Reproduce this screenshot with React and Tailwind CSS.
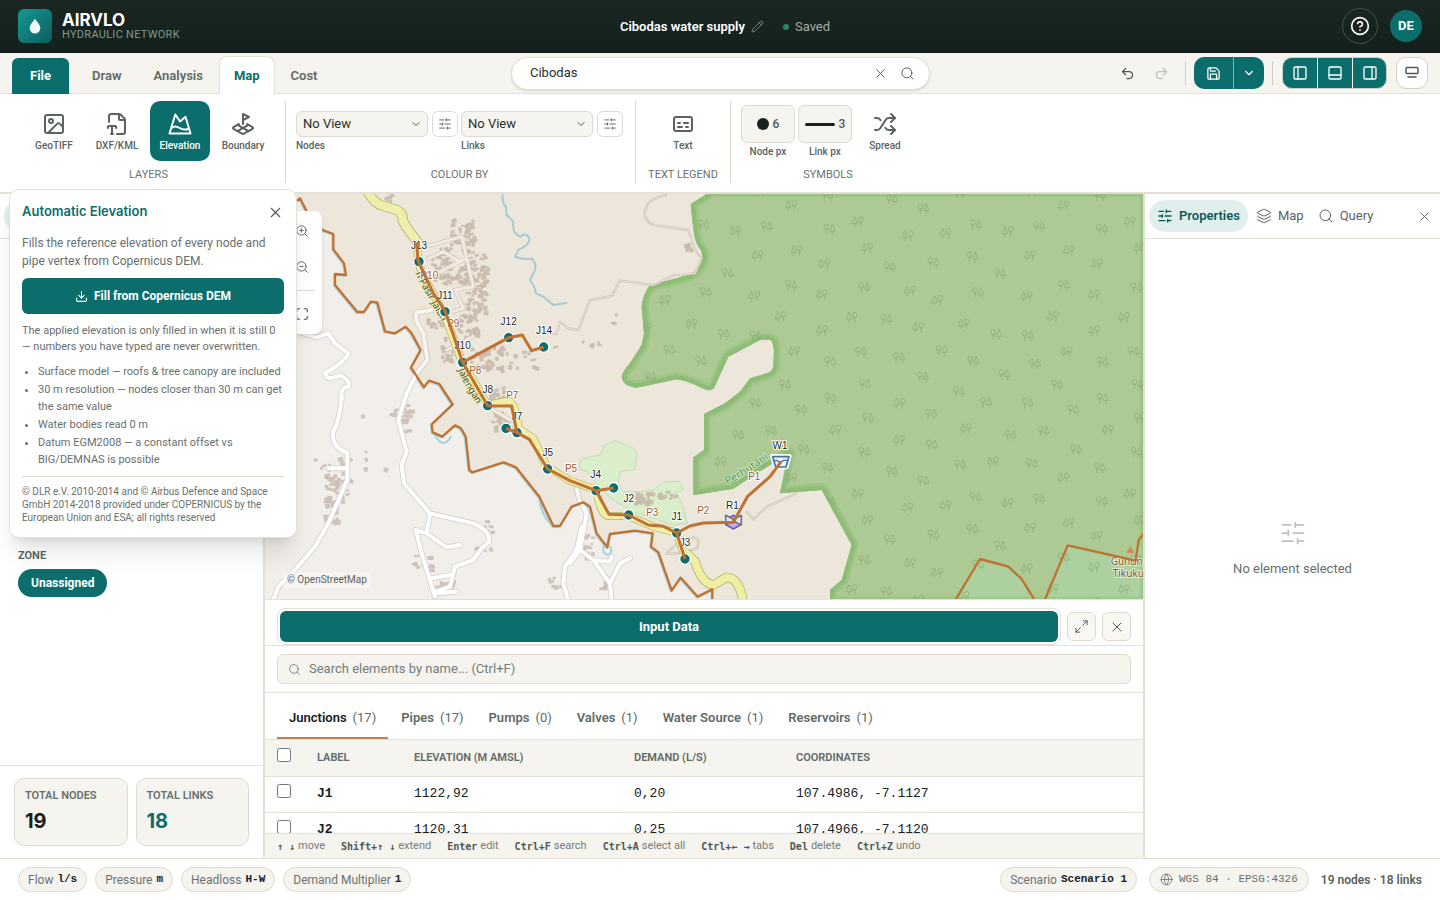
import {
  Captions, ChevronDown, CircleHelp, Download, FileType2, Globe, Image as ImageIcon, LandPlot, Layers,
  Maximize, Maximize2, PanelBottom, PanelLeft, PanelRight, Pencil, Redo2, Save, Search, Shuffle,
  SlidersHorizontal, Undo2, X, ZoomIn, ZoomOut,
} from "lucide-react";

/* ---------- Map data (three units per screen pixel) ---------- */

const TREES = [
  [23, 95, 1], [173, 137, 1], [287, 130, 1], [377, 105, 0], [473, 124, 1], [567, 110, 0], [755, 118, 0],
  [52, 175, 1], [119, 232, 0], [250, 218, 0], [367, 201, 0], [450, 251, 0], [540, 197, 1], [657, 182, 1],
  [740, 222, 1], [43, 293, 0], [180, 303, 1], [262, 332, 1], [384, 308, 0], [530, 319, 1], [641, 287, 0],
  [732, 315, 1], [5, 382, 1], [109, 388, 0], [205, 413, 1], [341, 402, 1], [438, 433, 0], [533, 437, 0],
  [609, 380, 1], [733, 422, 1], [33, 485, 0], [147, 503, 0], [275, 481, 0], [370, 514, 0], [463, 554, 0],
  [555, 522, 0], [650, 485, 1], [758, 516, 0], [45, 583, 0], [218, 561, 0], [326, 605, 0], [408, 637, 0],
  [148, 640, 1], [533, 640, 0], [622, 585, 0], [758, 625, 0], [54, 685, 0], [243, 672, 0], [348, 716, 1],
  [482, 736, 0], [580, 723, 0], [670, 660, 0], [774, 720, 1], [147, 751, 1], [246, 765, 0], [43, 787, 0],
  [330, 825, 0], [429, 816, 1], [546, 822, 0], [678, 780, 0], [125, 845, 0], [220, 873, 0], [641, 864, 1],
  [749, 834, 0],
];
const TREE_TILES = [953, 1770, 2587].flatMap((x) => [-817, 0, 817].map((y) => [x, y]));

const BOUNDARY_WEST =
  "100 40 120 25 137 58 160 105 188 120 220 132 220 178 252 220 258 255 225 252 225 285 292 366 312 366 333 335 352 338 375 424 405 430 437 410 455 430 482 480 453 533 492 592 507 572 538 582 578 643 515 703 518 727 547 740 585 706 602 714 617 740 628 840 637 847 731 817 768 832 838 920 880 1008 900 1008 935 950 970 937 990 950 1010 1030 1042 1072 1050 1032 1125 1022 1178 1030 1173 1070 1195 1087 1235 1202 1262 1163 1313 1220 1357 1198 1357 1240";
const BOUNDARY_EAST =
  "2080 1240 2160 1107 2245 1130 2285 1167 2330 1240 2350 1240 2423 1066 2627 1112 2636 1050 2660 1020";

const FOREST =
  "M1350 0 1340 12 1292 42 1297 90 1302 130Q1306 155 1315 170Q1332 190 1326 210Q1318 240 1290 253L1250 265 1170 285Q1148 315 1145 350L1152 430 1145 465 1110 520Q1085 548 1085 562Q1090 590 1130 593L1250 568Q1290 575 1320 592Q1350 608 1362 594L1405 500 1500 450Q1530 446 1537 455L1542 480 1540 530Q1535 546 1520 550L1470 565 1440 605 1395 640 1332 672 1332 780 1300 802 1300 915 1420 896 1490 850 1585 792 1560 910 1685 900 1775 1065 1745 1170 1710 1200 1710 1240 2660 1240 2660 0Z";

const ROADS = [
  "M245 620Q240 690 218 730Q218 775 262 788L262 870 205 1000 165 1070 100 1145 55 1190 40 1230",
  "M130 430 170 442 205 430 225 460 265 490Q262 510 195 550Q200 575 240 555Q275 575 265 590Q240 590 245 630",
  "M560 370 540 355 470 368Q460 385 490 430L502 510 470 550 440 610 415 690 440 785 425 825 432 880 510 970 640 1000Q690 1020 688 1055L665 1075 640 1110 585 1130 570 1190 527 1205",
  "M510 970 500 1030 467 1020 485 1090 525 1220M500 1030 560 1072 600 1065M515 1165 570 1155M527 1210 590 1205M205 835 262 835",
  "M950 895 958 930 980 970 960 1080 1000 1110 1050 1180 1055 1230M930 1120 960 1080M1050 1180 1080 1120 1110 1105M1000 1110 1050 1115 1055 1100",
  "M965 1010 950 1080 915 1130 910 1180 925 1230",
];
const LANES = ["M480 175 605 140 640 290 585 300 610 355 560 370M505 205 550 185 600 215M540 245 620 205M560 480 640 440M700 660 750 690"];
const TRAILS = [
  "M1218 15Q1150 30 1155 75Q1160 105 1200 108L1285 120 1305 180 1325 205 1305 250 1240 256 1180 285 1080 272 1055 318 990 330 955 420 925 415 900 395 890 432 850 425",
  "M1610 910 1520 950 1480 988 1460 965",
  "M1220 1090Q1250 1055 1300 1042Q1325 1050 1310 1075Q1270 1090 1222 1092Z",
];
const STREAM =
  "M728 12Q725 40 738 50L740 75 760 95Q755 130 780 140Q800 125 808 145Q810 165 775 180L765 200Q800 210 815 205 830 220 825 240L810 270Q825 290 828 310L850 320 880 345 920 338";
const MAIN_ROAD_NORTH = "M320 0Q340 40 370 48L410 60Q430 70 428 90Q435 110 480 165";
const MAIN_ROAD =
  "M472 165 474 215 490 260 550 365 604 510 683 645 745 632Q768 640 775 715L820 745 860 830 930 872 1010 900Q1020 975 1045 978L1105 978 1180 1010 1250 1028 1275 1100";
const MAIN_ROAD_SOUTH = "M1280 1090 1305 1115Q1325 1180 1360 1185L1400 1162Q1440 1165 1450 1240";
const MEADOW =
  "M958 815 970 805 1020 795 1035 765 1065 752 1120 775Q1132 785 1130 800L1125 838 1080 845 1075 880 1090 905 1140 905 1180 900 1215 875 1260 875 1270 897 1240 912 1262 928 1282 1000 1240 1005 1120 965 1060 930 1020 895 980 845 958 838Z";

const PIPES = [
  "470 158 474 212 520 310 555 362 608 517 683 647 755 648 771 728",
  "608 517 746 443 787 435 815 482 851 471",
  "738 715 771 728 808 748 863 837 930 872 1008 902 1061 894",
  "1008 902 1047 973 1106 975 1165 1005 1210 1009 1250 1029 1275 1107",
  "1250 1029 1290 1008 1330 999 1420 997 1462 920 1530 860 1563 815",
];
const JUNCTIONS = [
  [477, 215], [555, 365], [608, 517], [746, 443], [851, 471], [683, 647], [738, 715], [771, 728],
  [863, 837], [1008, 902], [1061, 894], [1106, 975], [1250, 1029], [1275, 1107],
];
const NODE_LABELS = [
  ["J13", 477, 177], ["J11", 555, 328], ["J10", 608, 477], ["J12", 746, 405], ["J14", 852, 431], ["J8", 683, 610],
  ["J7", 771, 691], ["J5", 863, 798], ["J4", 1007, 863], ["J2", 1106, 936], ["J1", 1250, 990],
  ["J3", 1275, 1068], ["R1", 1417, 957], ["W1", 1560, 777],
];
const PIPE_LABELS = [
  ["P10", 508, 267], ["P9", 580, 412], ["P8", 646, 552], ["P7", 757, 627], ["P5", 933, 847],
  ["P3", 1177, 978], ["P2", 1330, 972], ["P1", 1483, 870],
];

/* Clusters of houses: x, y, width, height, count */
const CLUSTERS = [
  [515, 165, 60, 60, 26], [520, 225, 100, 50, 34], [570, 90, 70, 70, 36], [600, 150, 40, 130, 30], [640, 190, 45, 90, 24],
  [615, 300, 60, 70, 28], [640, 280, 30, 30, 8],
  [590, 370, 60, 70, 34], [500, 375, 50, 40, 9], [540, 430, 40, 80, 16], [630, 470, 95, 70, 40],
  [730, 480, 100, 60, 12], [670, 590, 70, 40, 20], [695, 660, 50, 60, 26], [375, 10, 18, 20, 4], [875, 463, 12, 8, 1],
  [385, 650, 50, 40, 10], [420, 640, 40, 80, 16], [160, 800, 110, 40, 12], [190, 850, 45, 150, 60], [235, 840, 35, 130, 12],
  [455, 1090, 60, 50, 12], [520, 1150, 60, 40, 16], [610, 1065, 100, 16, 4], [670, 990, 35, 60, 8],
  [860, 1150, 50, 60, 8], [1120, 905, 60, 40, 26], [1190, 900, 50, 20, 10], [965, 1020, 30, 100, 14],
  [1010, 1170, 30, 30, 8], [1048, 366, 24, 36, 3], [964, 448, 68, 20, 5], [1274, 162, 14, 14, 8], [280, 640, 100, 200, 5],
];
function makeHouses() {
  let seed = 7;
  const next = () => {
    seed = (seed * 16807) % 2147483647;
    return seed / 2147483647;
  };
  return CLUSTERS.flatMap(([x, y, w, h, n]) =>
    Array.from({ length: n }, () => ({
      x: Math.round(x + next() * w),
      y: Math.round(y + next() * h),
      w: Math.round(6 + next() * 9),
      h: Math.round(5 + next() * 7),
      r: Math.round(next() * 50 - 25),
    }))
  );
}
const HOUSES = makeHouses();

function MapView() {
  return (
    <svg
      viewBox="15 12 2634 1215"
      preserveAspectRatio="xMinYMin slice"
      className="block h-full w-full"
      role="img"
      aria-label="Network map"
    >
      <defs>
        <clipPath id="forest-clip"><path d={FOREST} /></clipPath>
        <g id="tree-a" fill="none" stroke="#8bb079" strokeWidth="2.2">
          <ellipse cx="-9" cy="-7" rx="7" ry="8" />
          <path d="M-9 -2V15M-9 5 -4 0M9 -15 1 6H17ZM9 6V16" />
        </g>
        <g id="tree-b" fill="none" stroke="#8bb079" strokeWidth="2.2">
          <ellipse cx="9" cy="-7" rx="7" ry="8" />
          <path d="M9 -2V15M9 5 4 0M-9 -15 -17 6H-1ZM-9 6V16" />
        </g>
        <path id="street-a" d="M466 250Q500 320 590 470" />
        <path id="street-b" d="M594 540Q620 605 700 710" />
        <path id="forest-name" d="M1402 884Q1470 850 1560 780" />
      </defs>

      <rect x="0" y="0" width="2700" height="1300" fill="#f2efea" />
      <path d={MEADOW} fill="#dff8d8" stroke="#c4e8bc" strokeWidth="3" />

      <path d={FOREST} fill="#add19e" />
      <g clipPath="url(#forest-clip)" fill="none" strokeLinejoin="round">
        <path d={FOREST} stroke="#9ecb8e" strokeWidth="42" />
        <path d={FOREST} stroke="#8ac37c" strokeWidth="26" />
        {TREE_TILES.map(([tx, ty]) => (
          <g key={`${tx}:${ty}`} transform={`translate(${tx} ${ty})`}>
            {TREES.map(([x, y, kind]) => (
              <use key={`${x}-${y}`} href={kind ? "#tree-b" : "#tree-a"} x={x} y={y} />
            ))}
          </g>
        ))}
      </g>

      <g fill="none" strokeLinejoin="round" strokeLinecap="round">
        {TRAILS.map((d) => <path key={d} d={d} stroke="#d0cbc5" strokeWidth="7" />)}
        {TRAILS.map((d) => <path key={d} d={d} stroke="#eeebe6" strokeWidth="3" />)}
        <path d={STREAM} stroke="#a3d3e0" strokeWidth="6" />
        <polyline points={BOUNDARY_WEST} transform="translate(-3 3)" stroke="#b3d9e3" strokeWidth="6" />
        <path d="M524 735Q550 780 572 740M838 930Q845 980 880 1010M1035 1060Q1020 1090 1045 1095Q1060 1085 1050 1070" stroke="#a3d3e0" strokeWidth="6" />
      </g>
      <g fill="#d0c5bc" stroke="#c2b5ab" strokeWidth="1">
        {HOUSES.map((b, i) => (
          <rect key={i} x={b.x} y={b.y} width={b.w} height={b.h} transform={`rotate(${b.r} ${b.x} ${b.y})`} />
        ))}
      </g>
      <g fill="none" strokeLinejoin="round" strokeLinecap="round">
        {LANES.map((d) => <path key={d} d={d} stroke="#d6cdc8" strokeWidth="13" />)}
        {LANES.map((d) => <path key={d} d={d} stroke="#f8f3f2" strokeWidth="9" />)}
        {ROADS.map((d) => <path key={d} d={d} stroke="#d5d1cd" strokeWidth="17" />)}
        {ROADS.map((d) => <path key={d} d={d} stroke="#ffffff" strokeWidth="12" />)}
        <path d={MAIN_ROAD} stroke="#b5b76d" strokeWidth="24" />
        <path d={MAIN_ROAD_NORTH} stroke="#a9ab5b" strokeWidth="30" />
        <path d={MAIN_ROAD_SOUTH} stroke="#a9ab5b" strokeWidth="28" />
        <path d={MAIN_ROAD} stroke="#f6f8ac" strokeWidth="20" />
        <path d={MAIN_ROAD_NORTH} stroke="#f6f8b6" strokeWidth="26" />
        <path d={MAIN_ROAD_SOUTH} stroke="#f6f8ac" strokeWidth="24" />
      </g>

      <polygon points={`${BOUNDARY_WEST} ${BOUNDARY_EAST} 2660 0 100 0`} fill="#b88333" fillOpacity="0.08" />

      <g fontFamily="'Noto Sans', sans-serif" fontSize="29">
        <g fill="#4b4a20" stroke="#f4f3c0" strokeWidth="4" paintOrder="stroke">
          <text><textPath href="#street-a">n Pasir Jalan</textPath></text>
          <text><textPath href="#street-b">Jalengan</textPath></text>
        </g>
        <text fill="#4f9446" stroke="#dcebcf" strokeWidth="4" paintOrder="stroke" fontSize="32">
          <textPath href="#forest-name">Perhutani</textPath>
        </text>
        <g fill="#7a5a44" stroke="#e6eed8" strokeWidth="5" paintOrder="stroke" fontSize="30">
          <text x="2552" y="1124">Gunung</text>
          <text x="2558" y="1162">Tikukur</text>
        </g>
      </g>
      <path d="M2611 1068 2623 1089H2599Z" fill="#d08a4e" />

      <g fill="none" stroke="#bf7233" strokeWidth="7" strokeLinejoin="round">
        <polyline points={BOUNDARY_WEST} />
        <polyline points={BOUNDARY_EAST} />
      </g>

      <g fill="#0b6e6d" stroke="#fff" strokeWidth="4">
        {JUNCTIONS.map(([x, y]) => <circle key={`${x}-${y}`} cx={x} cy={y} r="16" />)}
      </g>
      <g strokeLinejoin="round">
        <path d="M1399 988 1420 976 1441 988V1005L1420 1017 1399 1005Z" fill="#f1ecfa" stroke="#fff" strokeWidth="11" />
        <path d="M1399 988 1420 976 1441 988V1005L1420 1017 1399 1005Z" fill="#c3b0e6" stroke="#7a4fc0" strokeWidth="5" />
        <path d="M1397 976 1420 988 1444 976V1005L1420 993 1397 1005Z" fill="#eceaf0" stroke="#6b7389" strokeWidth="5" />
        <path d="M1536 798H1589L1580 832H1545Z" fill="#eef4fa" stroke="#fff" strokeWidth="12" />
        <path d="M1538 800H1587L1578 831H1547Z" fill="#eef4fa" stroke="#42739f" strokeWidth="5" />
        <path d="M1543 814Q1549 808 1555 814T1567 814T1582 812" fill="none" stroke="#42739f" strokeWidth="4" />
      </g>
      <g fontFamily="'Liberation Sans', Arial, sans-serif" fontSize="30" textAnchor="middle" stroke="#fff" strokeWidth="6" strokeLinejoin="round" paintOrder="stroke">
        {NODE_LABELS.map(([t, x, y]) => <text key={t} x={x} y={y} fill="#1b1f1e">{t}</text>)}
        {PIPE_LABELS.map(([t, x, y]) => <text key={t} x={x} y={y} fill="#9c5a32">{t}</text>)}
      </g>
      <g fill="none" stroke="#bf7233" strokeWidth="9" strokeLinejoin="round">
        {PIPES.map((p) => <polyline key={p} points={p} />)}
      </g>
    </svg>
  );
}

/* ---------- Icons ---------- */

function ElevationIcon() {
  return (
    <svg viewBox="0 0 24 24" className="size-6" fill="none" stroke="currentColor" strokeWidth="2" strokeLinejoin="round" strokeLinecap="round" aria-hidden="true">
      <path d="M1.5 21.5 7.3 2.5 12 9.5 17.5 4.8 22.5 21.5Z" />
      <path d="M4 15.8C6.5 13.5 9 14.5 11.5 16S17.5 18.3 21 16.5" />
    </svg>
  );
}
function RibbonModeIcon() {
  return (
    <svg viewBox="0 0 16 16" className="size-4" fill="none" stroke="currentColor" strokeWidth="1.5" strokeLinejoin="round" strokeLinecap="round" aria-hidden="true">
      <rect x="2" y="2.5" width="12" height="6" rx="1" />
      <path d="M4 12H12" />
    </svg>
  );
}

/* ---------- Small parts ---------- */

function Tool({ icon, label, active }) {
  return (
    <button
      type="button"
      className={`flex h-15 w-15 flex-col items-center gap-1 rounded-[10px] pt-[11px] text-[10px] leading-3 font-medium ${active ? "bg-[#0b6e6d] text-white" : "text-[#5b6361]"}`}
    >
      {icon}
      {label}
    </button>
  );
}
function Group({ title, className, children }) {
  return (
    <section className={`flex h-[82px] flex-col justify-between ${className}`}>
      <div className="flex items-start gap-[3px]">{children}</div>
      <h2 className="text-center text-[11px] leading-[17px] text-[#6b7370]">{title}</h2>
    </section>
  );
}
function ColourPicker({ id, label }) {
  return (
    <div className="mt-[10px]">
      <div className="flex gap-1">
        <div className="relative">
          <select id={id} className="h-[26px] w-[132px] appearance-none rounded-md border border-[#dedad0] bg-[#f5f4ee] pl-[6px] text-[13px] text-[#26302d]">
            <option>No View</option>
          </select>
          <ChevronDown className="pointer-events-none absolute top-[7px] right-[6px] size-3 text-[#4f5856]" />
        </div>
        <button type="button" aria-label={`${label} settings`} className="grid size-[26px] place-items-center rounded-md border border-[#dedad0] bg-white text-[#4f5856]">
          <SlidersHorizontal size={14} strokeWidth={1.5} />
        </button>
      </div>
      <label htmlFor={id} className="mt-[3px] block text-[10px] leading-3 font-medium text-[#5b6361]">{label}</label>
    </div>
  );
}
function SizeBox({ label, value, children }) {
  return (
    <div className="mt-1 text-center">
      <button type="button" aria-label={label} className="flex h-[38px] w-[54px] items-center justify-center gap-1 rounded-md border border-[#dedad0] bg-[#f5f4ee] text-[12px] font-medium text-[#4f5856]">
        {children}
        {value}
      </button>
      <span className="mt-[3px] block text-[10px] leading-3 font-medium text-[#5b6361]">{label}</span>
    </div>
  );
}
function Chip({ label, value }) {
  return (
    <span className="flex h-[25px] items-center gap-1 rounded-full border border-[#dedad0] bg-[#f5f4ee] px-[9px] text-[12px] text-[#6b7370]">
      {label}
      <b className="font-['Liberation_Mono',monospace] text-[11px] text-[#17211e]">{value}</b>
    </span>
  );
}

const TABS = [["Junctions", 17], ["Pipes", 17], ["Pumps", 0], ["Valves", 1], ["Water Source", 1], ["Reservoirs", 1]];
const ROWS = [["J1", "1122,92", "0,20", "107.4986, -7.1127"], ["J2", "1120,31", "0,25", "107.4966, -7.1120"]];
const KEYS = [["↑ ↓", "move"], ["Shift+↑ ↓", "extend"], ["Enter", "edit"], ["Ctrl+F", "search"], ["Ctrl+A", "select all"], ["Ctrl+← →", "tabs"], ["Del", "delete"], ["Ctrl+Z", "undo"]];

/* ---------- Regions ---------- */

function Header() {
  return (
    <header className="grid h-[53px] shrink-0 grid-cols-[1fr_auto_1fr] items-center border-b border-[#0c1512] bg-linear-to-b from-[#1b2723] to-[#14201c] px-[18px]">
      <div className="flex items-center gap-[10px]">
        <div className="grid size-[34px] place-items-center rounded-md bg-linear-to-br from-[#159a94] to-[#0b5f5f]">
          <svg viewBox="0 0 12 16" className="h-4 w-3" fill="#eef8f7" aria-hidden="true">
            <path d="M6 0.5C7.5 3.5 11.3 6.5 11.3 10.2A5.3 5.3 0 0 1 0.7 10.2C0.7 6.5 4.5 3.5 6 0.5Z" />
          </svg>
        </div>
        <div>
          <h1 className="font-['Inter',sans-serif] text-[17px] leading-[17px] font-bold text-white">AIRVLO</h1>
          <p className="text-[11px] leading-3 tracking-wide text-[#7f9a8e]">HYDRAULIC NETWORK</p>
        </div>
      </div>
      <div className="flex items-center pt-px pl-[10px] text-[13px]">
        <span className="font-semibold text-white">Cibodas water supply</span>
        <button type="button" aria-label="Rename project" className="ml-[6px] text-[#8b9792]"><Pencil size={13} strokeWidth={1.5} /></button>
        <span className="mr-[6px] ml-[19px] size-[6px] rounded-full bg-[#2f8463]" />
        <span className="text-[#a3aca8]">Saved</span>
      </div>
      <div className="flex items-center justify-end gap-3">
        <button type="button" aria-label="Help" className="grid size-9 place-items-center rounded-full border border-[#45504c] text-white"><CircleHelp size={20} strokeWidth={2} /></button>
        <button type="button" className="size-8 rounded-full bg-[#0b6e6d] text-[13px] font-bold text-white">DE</button>
      </div>
    </header>
  );
}

function TabBar() {
  const plain = "h-9 px-4 text-[13px] font-semibold text-[#616a67]";
  return (
    <div className="grid h-[41px] shrink-0 grid-cols-[1fr_420px_1fr] items-center border-b border-[#e4e0d5] bg-[#f5f4ee] px-3">
      <nav className="-mb-px flex items-end self-end" aria-label="Ribbon">
        <button type="button" className="mr-[7px] h-9 rounded-t-md bg-[#0b6e6d] px-[18px] text-[13px] font-bold text-white">File</button>
        <button type="button" className={plain}>Draw</button>
        <button type="button" className={plain}>Analysis</button>
        <button type="button" className="h-[38px] rounded-t-lg border border-b-0 border-[#e4e0d5] bg-white px-[14px] text-[13px] font-bold text-[#0b6e6d]">Map</button>
        <button type="button" className={plain}>Cost</button>
      </nav>
      <div className="ml-px flex h-[33px] items-center rounded-full border border-[#e4e0d5] bg-white pr-[14px] pl-[18px] text-[#4f5856] shadow-sm">
        <input aria-label="Search place" defaultValue="Cibodas" className="min-w-0 flex-1 text-[13px] text-[#26302d] outline-none" />
        <button type="button" aria-label="Clear" className="mr-3"><X size={15} strokeWidth={1.5} /></button>
        <button type="button" aria-label="Search"><Search size={15} strokeWidth={1.5} /></button>
      </div>
      <div className="flex items-center justify-end text-[#4f5856]">
        <button type="button" aria-label="Undo" className="mr-[19px]"><Undo2 size={15} strokeWidth={2} /></button>
        <button type="button" aria-label="Redo" className="mr-4 text-[#bdbfba]"><Redo2 size={15} strokeWidth={2} /></button>
        <span className="h-6 w-px bg-[#cfccc3]" />
        <div className="mx-2 flex h-8 divide-x divide-[#7db3b1] overflow-hidden rounded-[10px] bg-[#0b6e6d] text-white">
          <button type="button" aria-label="Save" className="grid w-10 place-items-center"><Save size={15} strokeWidth={2} /></button>
          <button type="button" aria-label="Save options" className="grid w-[30px] place-items-center"><ChevronDown size={14} strokeWidth={2} /></button>
        </div>
        <span className="h-6 w-px bg-[#cfccc3]" />
        <div className="mx-[9px] flex h-8 divide-x divide-white overflow-hidden rounded-[10px] border border-[#c9d2c8] bg-[#0b6e6d] text-white">
          <button type="button" aria-label="Left panel" className="grid w-[35px] place-items-center"><PanelLeft size={16} strokeWidth={2} /></button>
          <button type="button" aria-label="Bottom panel" className="grid w-[35px] place-items-center"><PanelBottom size={16} strokeWidth={2} /></button>
          <button type="button" aria-label="Right panel" className="grid w-[33px] place-items-center"><PanelRight size={16} strokeWidth={2} /></button>
        </div>
        <button type="button" aria-label="Ribbon display" className="grid size-8 place-items-center rounded-[10px] border border-[#d6d2c2] bg-white"><RibbonModeIcon /></button>
      </div>
    </div>
  );
}

function Ribbon() {
  return (
    <div className="flex h-[100px] shrink-0 divide-x divide-[#dedad0] border-b-2 border-[#e4e0d5] bg-white px-3 pt-[7px]">
      <Group title="LAYERS" className="px-3">
        <Tool icon={<ImageIcon size={24} strokeWidth={2} />} label="GeoTIFF" />
        <Tool icon={<FileType2 size={24} strokeWidth={2} />} label="DXF/KML" />
        <Tool icon={<ElevationIcon />} label="Elevation" active />
        <Tool icon={<LandPlot size={24} strokeWidth={2} />} label="Boundary" />
      </Group>
      <Group title="COLOUR BY" className="pr-3 pl-[10px]">
        <ColourPicker id="nodes-view" label="Nodes" />
        <ColourPicker id="links-view" label="Links" />
      </Group>
      <Group title="TEXT LEGEND" className="w-[95px] px-[10px]">
        <div className="flex flex-1 justify-center"><Tool icon={<Captions size={24} strokeWidth={2} />} label="Text" /></div>
      </Group>
      <Group title="SYMBOLS" className="px-[10px]">
        <SizeBox label="Node px" value="6"><span className="size-3 rounded-full bg-[#17211e]" /></SizeBox>
        <SizeBox label="Link px" value="3"><span className="h-[3px] w-[30px] rounded-full bg-[#17211e]" /></SizeBox>
        <Tool icon={<Shuffle size={24} strokeWidth={2} />} label="Spread" />
      </Group>
    </div>
  );
}

function ElevationPopover() {
  return (
    <div role="dialog" aria-labelledby="elevation-title" className="absolute top-[-5px] left-[9px] z-20 w-[288px] rounded-[10px] border border-[#e4e0d5] bg-white px-3 pt-2 pb-[13px] text-[#68706d] shadow-xl">
      <div className="flex h-7 items-center justify-between">
        <h2 id="elevation-title" className="font-['Inter',sans-serif] text-[13px] font-semibold text-[#0b6e6d]">Automatic Elevation</h2>
        <button type="button" aria-label="Close" className="text-[#4f5856]"><X size={17} strokeWidth={1.5} /></button>
      </div>
      <p className="mt-2 text-[12px] leading-[18px]">Fills the reference elevation of every node and pipe vertex from Copernicus DEM.</p>
      <button type="button" className="mt-2 flex h-9 w-full items-center justify-center gap-[6px] rounded-md bg-[#0b6e6d] text-[12px] font-bold text-white">
        <Download size={13} strokeWidth={2} />
        Fill from Copernicus DEM
      </button>
      <p className="mt-[9px] text-[11px] leading-4">The applied elevation is only filled in when it is still 0 — numbers you have typed are never overwritten.</p>
      <ul className="mt-2 flex list-disc flex-col gap-px pl-4 text-[11px] leading-[17px]">
        <li>Surface model — roofs &amp; tree canopy are included</li>
        <li>30 m resolution — nodes closer than 30 m can get the same value</li>
        <li>Water bodies read 0 m</li>
        <li>Datum EGM2008 — a constant offset vs BIG/DEMNAS is possible</li>
      </ul>
      <p className="mt-2 border-t border-[#dedad0] pt-2 text-[10px] leading-[13px]">© DLR e.V. 2010-2014 and © Airbus Defence and Space GmbH 2014-2018 provided under COPERNICUS by the European Union and ESA; all rights reserved</p>
    </div>
  );
}

function LeftPanel() {
  const card = "flex-1 rounded-[10px] border border-[#dedad0] bg-[#f5f4ee] px-[10px] pt-[9px] pb-[11px]";
  return (
    <aside className="flex w-[265px] shrink-0 flex-col border-r-2 border-[#e4e0d5] bg-white">
      <div className="flex h-[45px] items-center border-b border-[#e4e0d5] px-1">
        <span className="h-8 w-[99px] rounded-full bg-[#e1efec]" />
      </div>
      <div className="flex flex-1 flex-col items-start px-[18px] pt-[308px]">
        <h3 className="text-[11px] leading-[17px] font-semibold text-[#59625f]">ZONE</h3>
        <button type="button" className="mt-[5px] h-7 rounded-full bg-[#0b6e6d] px-[13px] text-[12px] font-bold text-white">Unassigned</button>
      </div>
      <div className="flex gap-2 border-t border-[#e4e0d5] px-[14px] py-3">
        <div className={card}>
          <p className="text-[11px] leading-4 font-semibold text-[#68706d]">TOTAL NODES</p>
          <p className="mt-1 font-['Inter',sans-serif] text-[20px] leading-[26px] font-bold text-[#17211e]">19</p>
        </div>
        <div className={card}>
          <p className="text-[11px] leading-4 font-semibold text-[#68706d]">TOTAL LINKS</p>
          <p className="mt-1 font-['Inter',sans-serif] text-[20px] leading-[26px] font-bold text-[#0b6e6d]">18</p>
        </div>
      </div>
    </aside>
  );
}

function DataPanel() {
  const icon = "grid size-[29px] place-items-center rounded-md border border-[#dedad0] bg-[#f8f7f2] text-[#4f5856]";
  const cell = "px-3 text-left";
  const box = "mb-[6px] block size-[14px]";
  return (
    <section className="flex h-[259px] shrink-0 flex-col border-t border-[#e4e0d5] bg-white">
      <div className="flex h-[46px] shrink-0 items-center gap-[6px] border-b border-[#e4e0d5] px-3 pt-2">
        <div className="flex-1 rounded-lg border border-[#e4e0d5] p-[2px]">
          <button type="button" className="block h-[31px] w-full rounded-md bg-[#0b6e6d] text-[13px] font-bold text-white">Input Data</button>
        </div>
        <button type="button" aria-label="Expand" className={icon}><Maximize2 size={15} strokeWidth={1.5} /></button>
        <button type="button" aria-label="Close panel" className={icon}><X size={16} strokeWidth={1.5} /></button>
      </div>
      <div className="shrink-0 border-b border-[#e4e0d5] px-3 py-2">
        <div className="flex h-[30px] items-center gap-2 rounded-md border border-[#dedad0] bg-[#f5f4ee] px-[10px] text-[#6b7370]">
          <Search size={13} strokeWidth={1.5} />
          <input aria-label="Search elements" placeholder="Search elements by name... (Ctrl+F)" className="min-w-0 flex-1 text-[13px] outline-none placeholder:text-[#757d7a]" />
        </div>
      </div>
      <div className="flex h-[47px] shrink-0 gap-px border-b border-[#e4e0d5] px-3" role="tablist">
        {TABS.map(([name, count], i) => (
          <button key={name} type="button" role="tab" aria-selected={i === 0} className={`flex items-center gap-[6px] border-b-2 px-3 pt-[6px] text-[13px] ${i === 0 ? "border-[#c07f4a] text-[#17211e]" : "border-transparent text-[#616a67]"}`}>
            <span className="font-semibold">{name}</span>
            <span className="text-[#616a67]">({count})</span>
          </button>
        ))}
      </div>
      <div className="min-h-0 flex-1 overflow-hidden">
        <table className="w-full table-fixed border-collapse">
          <thead>
            <tr className="h-9 border-b border-[#e4e0d5] bg-[#f5f4ee] text-[11px] text-[#616a67]">
              <th className="w-10 px-3 text-left"><input type="checkbox" aria-label="Select all" className={box} /></th>
              <th className={`w-[97px] font-semibold ${cell}`}>LABEL</th>
              <th className={`w-[220px] font-semibold ${cell}`}>ELEVATION (M AMSL)</th>
              <th className={`w-[162px] font-semibold ${cell}`}>DEMAND (L/S)</th>
              <th className={`font-semibold ${cell}`}>COORDINATES</th>
            </tr>
          </thead>
          <tbody className="font-['Liberation_Mono',monospace] text-[13px] text-[#17211e]">
            {ROWS.map(([label, ...rest]) => (
              <tr key={label} className="h-9 border-b border-[#e4e0d5]">
                <td className="px-3"><input type="checkbox" aria-label={`Select ${label}`} className={box} /></td>
                <td className={`font-bold ${cell}`}>{label}</td>
                {rest.map((v) => <td key={v} className={cell}>{v}</td>)}
              </tr>
            ))}
          </tbody>
        </table>
      </div>
      <div className="flex h-[25px] shrink-0 items-center gap-4 border-t border-[#e4e0d5] bg-[#f5f4ee] px-3 text-[11px] whitespace-nowrap text-[#757d7a]">
        {KEYS.map(([k, t]) => (
          <span key={k} className="flex items-center gap-[3px]">
            <kbd className="font-['DejaVu_Sans_Mono',monospace] text-[10px] font-bold text-[#4f5856]">{k}</kbd>
            {t}
          </span>
        ))}
      </div>
    </section>
  );
}

function RightPanel() {
  return (
    <aside className="flex w-[297px] shrink-0 flex-col border-l-2 border-[#e4e0d5] bg-white text-[13px] text-[#59625f]">
      <div className="flex h-[45px] items-center border-b border-[#e4e0d5] pr-2 pl-1">
        <button type="button" className="flex h-8 items-center gap-[6px] rounded-full bg-[#e1efec] px-2 font-semibold text-[#0b5a58]"><SlidersHorizontal size={16} strokeWidth={2} />Properties</button>
        <button type="button" className="flex h-8 items-center gap-[6px] px-2"><Layers size={16} strokeWidth={1.5} />Map</button>
        <button type="button" className="flex h-8 items-center gap-[6px] px-[6px]"><Search size={16} strokeWidth={1.5} />Query</button>
        <button type="button" aria-label="Close panel" className="ml-auto"><X size={15} strokeWidth={1.5} /></button>
      </div>
      <div className="flex flex-1 flex-col items-center justify-center gap-3 text-[#68706d]">
        <SlidersHorizontal size={28} strokeWidth={1.5} className="text-[#bfc2bf]" />
        <p>No element selected</p>
      </div>
    </aside>
  );
}

export default function App() {
  return (
    <div className="flex h-screen flex-col overflow-hidden bg-white font-['Roboto',sans-serif] text-[#26302d]">
      <Header />
      <TabBar />
      <Ribbon />
      <main className="relative flex min-h-0 flex-1">
        <LeftPanel />
        <div className="flex min-w-0 flex-1 flex-col">
          <div className="relative min-h-0 flex-1 overflow-hidden">
            <MapView />
            <div className="absolute top-[17px] left-[17px] flex w-10 flex-col items-center rounded-lg bg-white py-[2px] text-[#4f5856] shadow-md">
              <button type="button" aria-label="Zoom in" className="grid size-9 place-items-center"><ZoomIn size={14} strokeWidth={1.5} /></button>
              <button type="button" aria-label="Zoom out" className="grid size-9 place-items-center"><ZoomOut size={14} strokeWidth={1.5} /></button>
              <span className="my-[5px] h-px w-6 bg-[#dedad0]" />
              <button type="button" aria-label="Fit to network" className="grid size-9 place-items-center"><Maximize size={14} strokeWidth={2} /></button>
            </div>
            <p className="absolute bottom-[11px] left-[18px] rounded-sm bg-white/40 px-1 text-[10px] leading-4 text-[#59625f]">© OpenStreetMap</p>
          </div>
          <DataPanel />
        </div>
        <RightPanel />
        <ElevationPopover />
      </main>
      <footer className="flex h-[42px] shrink-0 items-center gap-2 border-t border-[#e4e0d5] bg-white px-[18px] text-[12px] text-[#59625f]">
        <Chip label="Flow" value="l/s" />
        <Chip label="Pressure" value="m" />
        <Chip label="Headloss" value="H-W" />
        <Chip label="Demand Multiplier" value="1" />
        <div className="ml-auto flex items-center gap-3">
          <Chip label="Scenario" value="Scenario 1" />
          <span className="flex h-[25px] items-center gap-[6px] rounded-full border border-[#dedad0] bg-[#f5f4ee] px-[10px] font-['Liberation_Mono',monospace] text-[11px] text-[#68706d]">
            <Globe size={13} strokeWidth={1.5} />WGS 84 · EPSG:4326
          </span>
          <span className="font-semibold">19 nodes · 18 links</span>
        </div>
      </footer>
    </div>
  );
}
